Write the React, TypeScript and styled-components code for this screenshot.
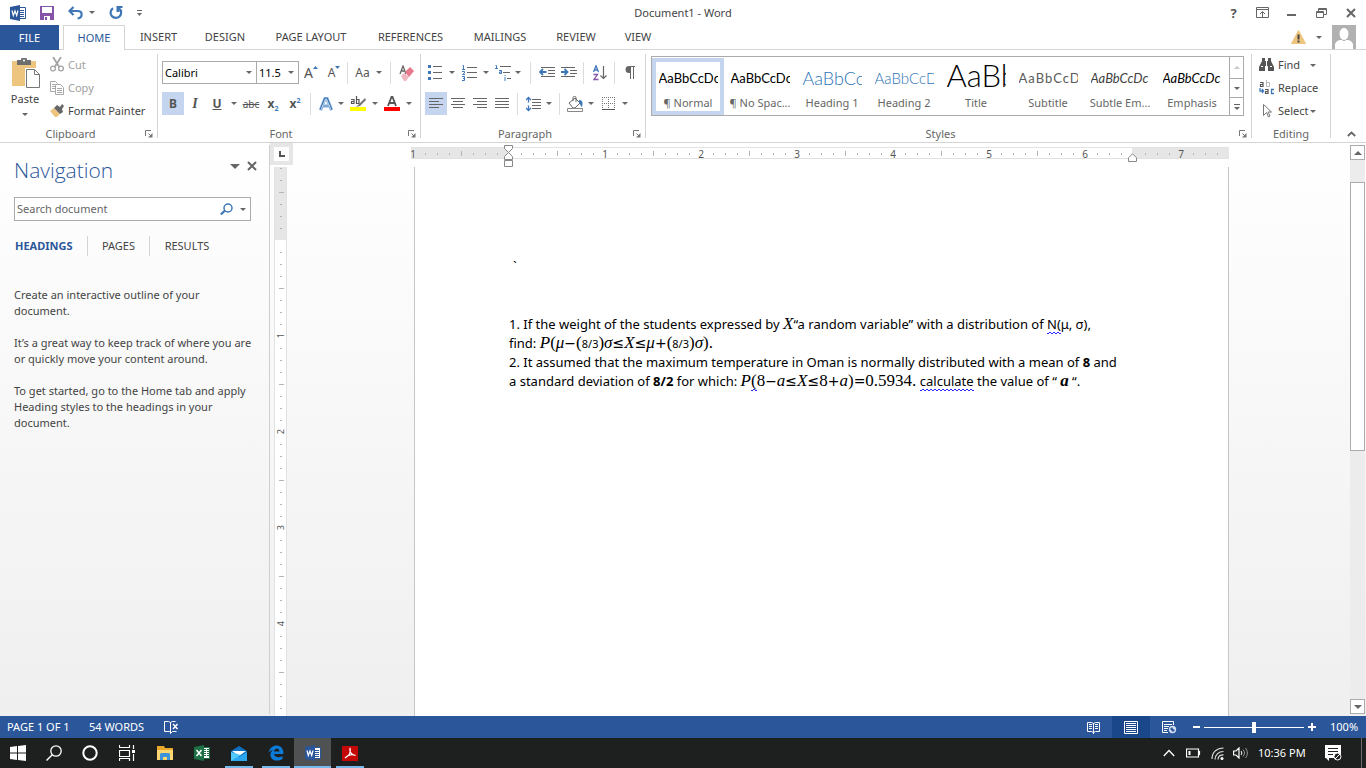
import React from 'react';
import styled, { createGlobalStyle, css } from 'styled-components';

const UI = '"Noto Sans", "Open Sans", sans-serif';
const BLUE = '#2b579a';
const INK = '#444444';
const LINE = '#d4d4d4';

const Global = createGlobalStyle`
  * { box-sizing: border-box; }
  html, body, #root { height: 100%; }
  body { margin: 0; overflow: hidden; background: #fff; color: ${INK}; font: 11px/16px ${UI}; }
  button, input, select { font: inherit; color: inherit; }
  svg { display: block; flex: none; }
  p, h1, h2, ul { margin: 0; padding: 0; font-weight: 400; }
`;

const Window = styled.div`
  display: flex;
  flex-direction: column;
  height: 100vh;
`;

const Button = styled.button<{ $w?: number; $on?: boolean; $dim?: boolean }>`
  display: flex;
  align-items: center;
  justify-content: center;
  flex: none;
  width: ${p => (p.$w ? `${p.$w}px` : 'auto')};
  height: 23px;
  padding: 0;
  border: 0;
  background: ${p => (p.$on ? '#c5d5f0' : 'transparent')};
  color: ${p => (p.$dim ? '#a0a0a0' : INK)};
`;

const Caret = styled.span<{ $size?: number; $up?: boolean; $color?: string }>`
  flex: none;
  width: 0;
  height: 0;
  border: ${p => p.$size || 3}px solid transparent;
  ${p =>
    p.$up
      ? css`border-top-width: 0; border-bottom-color: ${p.$color || '#666'};`
      : css`border-bottom-width: 0; border-top-color: ${p.$color || '#666'};`}
`;

/* Title bar */
const TitleBar = styled.header`
  display: grid;
  grid-template-columns: 1fr auto 1fr;
  align-items: center;
  flex: none;
  height: 25px;
`;
const QuickAccess = styled.div`
  display: flex;
  align-items: center;
  height: 22px;
  padding-left: 2px;
`;
const DocTitle = styled.h1`
  font-size: 11px;
  line-height: 16px;
`;
const WindowButtons = styled.div`
  display: flex;
  align-items: center;
  justify-content: flex-end;
  height: 23px;
`;

/* Ribbon tabs */
const TabStrip = styled.nav`
  display: flex;
  flex: none;
  height: 25px;
  border-bottom: 1px solid ${LINE};
`;
const Tab = styled.button<{ $w: number; $kind?: 'file' | 'active' }>`
  width: ${p => p.$w}px;
  height: 25px;
  padding: 0;
  flex: none;
  border: 0;
  background: #fff;
  line-height: 24px;
  ${p => p.$kind === 'file' && css`background: ${BLUE}; color: #fff; margin-right: 4px;`}
  ${p =>
    p.$kind === 'active' &&
    css`color: ${BLUE}; border: 1px solid ${LINE}; border-bottom: 0;`}
  ${p => !p.$kind && css`background: transparent; height: 24px;`}
`;
const Account = styled.div`
  display: flex;
  align-items: center;
  gap: 10px;
  margin-left: auto;
  padding-right: 10px;
`;

/* Ribbon */
const Ribbon = styled.section`
  display: flex;
  flex: none;
  height: 93px;
  padding: 4px 0;
  border-bottom: 1px solid ${LINE};
`;
const Group = styled.div<{ $w?: number }>`
  display: flex;
  flex-direction: column;
  flex: ${p => (p.$w ? `0 0 ${p.$w}px` : '1 1 0')};
  min-width: 0;
  border-right: 1px solid ${LINE};
`;
const GroupBody = styled.div<{ $pad?: string }>`
  display: flex;
  flex: 1;
  min-height: 0;
  padding: ${p => p.$pad || '0'};
`;
const GroupFoot = styled.div<{ $launcher: boolean }>`
  display: grid;
  grid-template: 8px / ${p => (p.$launcher ? '1fr 16px' : '1fr')};
  align-items: center;
  flex: none;
  color: #666;
  text-align: center;
`;
const Rows = styled.div<{ $gap: number }>`
  display: flex;
  flex-direction: column;
  gap: ${p => p.$gap}px;
`;
const Row = styled.div`
  display: flex;
  align-items: center;
`;
const Sep = styled.span<{ $m: string }>`
  flex: none;
  width: 1px;
  height: 22px;
  margin: ${p => p.$m};
  background: #dcdcdc;
`;
const PasteButton = styled.button`
  display: flex;
  flex-direction: column;
  align-items: center;
  width: 50px;
  padding: 4px 0 0;
  border: 0;
  background: none;
  svg { margin-bottom: 2px; }
  span + span { margin-top: 6px; }
`;
const Command = styled.button<{ $dim?: boolean }>`
  display: flex;
  align-items: center;
  gap: 4px;
  height: 23px;
  padding: 0 0 2px;
  border: 0;
  background: none;
  color: ${p => (p.$dim ? '#a0a0a0' : INK)};
`;
const Combo = styled.label<{ $w: number }>`
  display: flex;
  align-items: center;
  width: ${p => p.$w}px;
  height: 23px;
  padding: 0 4px 0 2px;
  border: 1px solid #ababab;
  color: #000;
  & + & { margin-left: -1px; }
  input {
    flex: 1;
    min-width: 0;
    width: 0;
    padding: 0;
    border: 0;
    outline: 0;
    background: none;
  }
`;
const Letter = styled.span<{ $size?: number; $bold?: boolean; $italic?: boolean; $line?: string; $serif?: boolean }>`
  font-family: ${p => (p.$serif ? '"Liberation Serif", serif' : UI)};
  font-size: ${p => p.$size || 12}px;
  font-weight: ${p => (p.$bold ? 700 : 400)};
  font-style: ${p => (p.$italic ? 'italic' : 'normal')};
  text-decoration: ${p => p.$line || 'none'};
  color: #555;
  line-height: 16px;
  sub, sup { font-size: 7px; line-height: 0; color: #3d77b8; }
`;

/* Style gallery */
const Gallery = styled.div`
  display: flex;
  flex: 1;
  height: 60px;
  border: 1px solid #ababab;
`;
const StyleList = styled.div`
  display: flex;
  flex: 1;
  overflow: hidden;
`;
const StyleTile = styled.button<{ $on?: boolean }>`
  display: flex;
  flex-direction: column;
  align-items: center;
  flex: 0 0 72px;
  height: 57px;
  margin-top: 1px;
  padding: 0;
  border: 4px solid ${p => (p.$on ? '#c5d5f0' : 'transparent')};
  background: none;
  color: #666;
  white-space: nowrap;
`;
const Preview = styled.span<{ $size: number; $color: string; $italic?: boolean; $light?: boolean; $spaced?: boolean }>`
  display: flex;
  align-items: flex-end;
  flex: none;
  width: 59px;
  height: 25px;
  margin-bottom: 8px;
  overflow: hidden;
  font-family: Lato, ${UI};
  font-size: ${p => p.$size}px;
  line-height: ${p => (p.$size > 20 ? 24 : 18)}px;
  color: ${p => p.$color};
  font-style: ${p => (p.$italic ? 'italic' : 'normal')};
  font-weight: ${p => (p.$light ? 300 : 400)};
  letter-spacing: ${p => (p.$spaced ? '1px' : 'normal')};
`;
const GalleryScroll = styled.div`
  display: grid;
  grid-template-rows: 21px 19px 1fr;
  width: 14px;
  border-left: 1px solid #ababab;
  button {
    display: flex;
    flex-direction: column;
    gap: 2px;
    align-items: center;
    justify-content: center;
    padding: 0;
    border: 0;
    background: none;
  }
  button + button { border-top: 1px solid #ababab; }
`;
const Dash = styled.span`
  width: 6px;
  height: 1px;
  background: #666;
`;
const Collapse = styled.div`
  display: flex;
  align-items: flex-end;
  justify-content: center;
  flex: 0 0 35px;
  padding-left: 6px;
  button { height: 8px; }
`;

/* Workspace */
const Workspace = styled.main`
  display: flex;
  flex: 1;
  min-height: 0;
  background: linear-gradient(#fff, #efefef);
`;
const NavPane = styled.aside`
  flex: 0 0 270px;
  margin: 2px 0;
  padding: 12px 14px 0;
  border-right: 1px solid #cfcfcf;
`;
const NavHead = styled.div`
  display: flex;
  align-items: flex-start;
  height: 26px;
  margin-right: -5px;
  h2 {
    flex: 1;
    font: 300 21px/26px "Open Sans", ${UI};
    color: ${BLUE};
  }
  button { height: 18px; }
`;
const SearchBox = styled.label`
  display: flex;
  align-items: center;
  gap: 7px;
  height: 24px;
  margin: 14px 4px 15px 0;
  padding: 0 4px 0 2px;
  border: 1px solid #ababab;
  background: #fff;
  input {
    flex: 1;
    min-width: 0;
    padding: 0;
    border: 0;
    outline: 0;
    background: none;
  }
  input::placeholder { color: #666; opacity: 1; }
`;
const NavTabs = styled.div`
  display: flex;
  align-items: center;
  height: 20px;
`;
const NavTab = styled.button<{ $w: number; $on?: boolean }>`
  width: ${p => p.$w}px;
  height: 20px;
  padding: 0;
  border: 0;
  background: none;
  color: ${p => (p.$on ? BLUE : INK)};
  font-weight: ${p => (p.$on ? 700 : 400)};
  & + & { border-left: 1px solid ${LINE}; }
  &:first-child { text-align: left; padding-left: 1px; }
`;
const NavText = styled.div`
  display: grid;
  gap: 16px;
  margin: 31px -14px 0 0;
`;

const VRulerColumn = styled.div`
  display: flex;
  flex-direction: column;
  align-items: center;
  flex: 0 0 23px;
  overflow: hidden;
`;
const TabSelector = styled.button`
  display: flex;
  align-items: center;
  justify-content: center;
  flex: none;
  width: 23px;
  height: 22px;
  padding: 0;
  border: 4px solid #e6e6e6;
  background: #fff;
`;
const VRuler = styled.div`
  flex: 1;
  width: 13px;
  margin: 2px 2px 0 0;
  overflow: hidden;
  border: solid #e2e2e2;
  border-width: 0 1px;
  background: linear-gradient(#e6e6e6 73px, #fff 73px);
`;
const VTicks = styled.div`
  margin-top: -5px;
  padding-left: 1px;
`;
const VTick = styled.div`
  display: flex;
  align-items: center;
  justify-content: center;
  height: 12px;
`;
const Mark = styled.i<{ $w: number; $h: number }>`
  width: ${p => p.$w}px;
  height: ${p => p.$h}px;
  background: #b4b4b4;
`;
const RulerNumber = styled.span<{ $turned?: boolean }>`
  font-size: 10px;
  line-height: 12px;
  color: #555;
  ${p => p.$turned && css`writing-mode: vertical-rl; rotate: 180deg; font-size: 9px;`}
`;

const Canvas = styled.section`
  display: flex;
  flex-direction: column;
  align-items: center;
  flex: 1;
  min-width: 0;
  padding-right: 3px;
`;
const HRuler = styled.div`
  position: relative;
  flex: none;
  width: 818px;
  height: 12px;
  margin-top: 4px;
  border: solid #e2e2e2;
  border-width: 1px 0;
  background: linear-gradient(90deg, #e6e6e6 97px, #fff 97px, #fff 721px, #e6e6e6 721px);
`;
const HTicks = styled.div`
  display: flex;
  height: 11px;
  margin-left: -4px;
`;
const HTick = styled.div`
  display: flex;
  align-items: center;
  justify-content: center;
  flex: 0 0 12px;
`;
const Indent = styled.svg<{ $x: number; $y: number }>`
  position: absolute;
  left: ${p => p.$x}px;
  top: ${p => p.$y}px;
`;
const Page = styled.article`
  flex: 1;
  width: 815px;
  margin: 8px 0 0 3px;
  padding: 90px 94px 0;
  border: solid #c6c6c6;
  border-width: 0 1px;
  background: #fff;
  color: #000;
  font: 13px/19px "Noto Sans", "Open Sans", sans-serif;
  white-space: nowrap;
`;
const Stray = styled.p`
  margin: 0 0 39px 4px;
`;
const MathText = styled.span`
  font: italic 17px "Liberation Serif", serif;
  line-height: 0;
  span { font-style: normal; }
  small { font: 11px "Noto Sans", sans-serif; line-height: 0; }
`;
const Op = styled.span`
  font-family: "DejaVu Sans", sans-serif;
  font-size: 14px;
`;
const Squiggle = styled.span`
  padding-bottom: 1px;
  background:
    linear-gradient(90deg, #2a2aff 2px, transparent 2px) 0 100% / 4px 1px repeat-x,
    linear-gradient(90deg, #2a2aff 2px, transparent 2px) 2px calc(100% - 1px) / 4px 1px repeat-x;
`;
const BoldItalic = styled.b`
  font: italic 700 17px "Liberation Serif", serif;
  line-height: 0;
`;

const ScrollBar = styled.div`
  display: flex;
  flex-direction: column;
  flex: 0 0 15px;
  margin: 2px 1px 2px 0;
  background: #ececec;
`;
const ScrollButton = styled.button`
  display: flex;
  align-items: center;
  justify-content: center;
  flex: none;
  height: 15px;
  padding: 0;
  border: 1px solid #ababab;
  background: #fff;
`;
const Track = styled.div`
  flex: 1;
  padding-top: 22px;
`;
const Thumb = styled.div`
  height: 52%;
  border: 1px solid #ababab;
  background: #fff;
`;

/* Status bar */
const StatusBar = styled.footer`
  display: flex;
  align-items: center;
  flex: none;
  height: 22px;
  padding: 0 8px 0 7px;
  background: ${BLUE};
  color: #fff;
`;
const StatusText = styled.span<{ $w?: number }>`
  width: ${p => (p.$w ? `${p.$w}px` : 'auto')};
`;
const Spacer = styled.span`
  flex: 1;
`;
const ViewButton = styled.button<{ $on?: boolean }>`
  display: flex;
  align-items: center;
  justify-content: center;
  width: 38px;
  height: 22px;
  padding: 0;
  border: 0;
  background: ${p => (p.$on ? '#19478a' : 'none')};
`;
const Zoom = styled.div`
  display: flex;
  align-items: center;
  margin: 0 11px 0 1px;
  button { width: 15px; height: 22px; padding: 0; border: 0; background: none; color: #fff; }
  button svg { margin: auto; }
  input {
    appearance: none;
    width: 100px;
    height: 12px;
    margin: 0;
    background: linear-gradient(#fff, #fff) center / 100% 1px no-repeat;
  }
  input::-webkit-slider-thumb {
    appearance: none;
    width: 4px;
    height: 11px;
    background: #fff;
  }
`;

/* Taskbar */
const TaskBar = styled.footer`
  display: flex;
  align-items: stretch;
  flex: none;
  height: 30px;
  background: #1e1f1f;
  color: #fff;
`;
const TaskButton = styled.button<{ $w: number; $open?: boolean; $active?: boolean }>`
  display: flex;
  align-items: center;
  justify-content: center;
  width: ${p => p.$w}px;
  padding: 0;
  border: 0;
  background: ${p => (p.$active ? '#505152' : 'none')};
  ${p =>
    p.$open &&
    css`
      background-image: linear-gradient(#76b9ed, #76b9ed);
      background-repeat: no-repeat;
      background-position: bottom;
      background-size: ${p.$active ? '100%' : '28px'} 2px;
    `}
`;
const Tray = styled.div`
  display: flex;
  align-items: center;
  margin-left: auto;
  padding-right: 4px;
`;
const Clock = styled.time`
  width: 67px;
  padding-left: 5px;
`;
const Peek = styled.span`
  width: 1px;
  height: 30px;
  margin-left: 15px;
  background: #6a6a6a;
`;

/* Icons */
type IconProps = { w: number; h: number; children: React.ReactNode };
const Icon = ({ w, h, children }: IconProps) => (
  <svg width={w} height={h} viewBox={`0 0 ${w} ${h}`} fill="none" aria-hidden="true">{children}</svg>
);
const Lines = ({ rows, stroke = '#666' }: { rows: [number, number, number][]; stroke?: string }) => (
  <path d={rows.map(([x, y, w]) => `M${x} ${y + 0.5}h${w}`).join('')} stroke={stroke} />
);
const WordIcon = () => (
  <Icon w={16} h={16}>
    <path d="M8.5 2.5h7v11h-7z" fill="#fff" stroke={BLUE} />
    <path d="M10 5.5h4M10 7.5h4M10 9.5h4M10 11.5h4" stroke={BLUE} />
    <path d="M0 2l10-2v16L0 14z" fill={BLUE} />
    <path d="M2 5.5l1.300 5L5 6l1.700 4.500 1.300-5" stroke="#fff" strokeWidth="1.200" />
  </Icon>
);
const SaveIcon = () => (
  <Icon w={14} h={14}>
    <path d="M0 0h14v14H0z" fill="#8655a8" />
    <path d="M2 1h10v6H2zM4 10h6v4H4z" fill="#fff" />
    <path d="M5 11h2v3H5z" fill="#8655a8" />
  </Icon>
);
const UndoIcon = () => (
  <Icon w={15} h={14}>
    <path d="M5.500 1L1.500 5l4 4M2 5h7.500c5.500 0 5.500 6.500 0 7.500" stroke="#3e77b6" strokeWidth="2.200" />
  </Icon>
);
const RedoIcon = () => (
  <Icon w={14} h={14}>
    <path d="M4 2.200A5.300 5.300 0 1 0 10 2.400" stroke="#3e77b6" strokeWidth="2.200" />
    <path d="M7.500 0h6v2H10.500l0 4h-3z" fill="#3e77b6" />
  </Icon>
);
const Launcher = () => (
  <Button $w={16} aria-label="More options">
    <Icon w={8} h={8}>
      <path d="M.5 6V.5H6M3.500 3.500l3 3" stroke="#777" />
      <path d="M7.500 3v4.500H3z" fill="#777" />
    </Icon>
  </Button>
);
const PasteIcon = () => (
  <Icon w={29} h={31}>
    <path d="M1 3h24v25H1z" fill="#eec57e" />
    <path d="M6 2h4a3 3 0 0 1 6 0h4v5H6z" fill="#6e6e6e" />
    <circle cx="13" cy="2.500" r="1" fill="#fff" />
    <path d="M14 10h15v21H14z" fill="#fff" />
    <path d="M15.500 11.500h8l5 5v13h-13zM23.500 11.500v5h5" stroke="#777" fill="#fff" />
  </Icon>
);
const CutIcon = () => (
  <Icon w={14} h={15}>
    <path d="M3 0l6 9.500M11 0L5 9.500" stroke="#a3a3a3" strokeWidth="1.800" />
    <circle cx="3" cy="11.500" r="2.400" stroke="#a3a3a3" strokeWidth="1.300" />
    <circle cx="11" cy="11.500" r="2.400" stroke="#a3a3a3" strokeWidth="1.300" />
  </Icon>
);
const CopyIcon = () => (
  <Icon w={14} h={14}>
    <path d="M5 10.500H.5V.5h5l2 2M2 3.500h3M2 5.500h3M2 7.500h3" stroke="#a8a8a8" />
    <path d="M5.500 3.500h5l3 3v7h-8zM7 7.500h5M7 9.500h5M7 11.500h5" stroke="#a8a8a8" fill="#fff" />
  </Icon>
);
const PainterIcon = () => (
  <Icon w={14} h={13}>
    <path d="M0 7l4-3 6 6-3 3H5z" fill="#eec57e" />
    <path d="M4 4l3-3 3 2 2-3 2 2-2 3 1 3-3 2z" fill="#666" />
  </Icon>
);
const GrowShrink = ({ size, up }: { size: number; up?: boolean }) => (
  <>
    <Letter $size={size}>A</Letter>
    <Icon w={5} h={14}><path d={up ? 'M0 3l2.500-3L5 3z' : 'M0 0h5L2.500 3z'} fill="#3e77b6" /></Icon>
  </>
);
const EraserIcon = () => (
  <Icon w={15} h={16}>
    <path d="M1 9l3-8 3 8M2 6h4" stroke="#666" strokeWidth="1.300" />
    <path d="M2 11l3-3 5 4-3 4H5z" fill="#f2b6c0" />
    <path d="M6 7l5-5 4 4-5 6z" fill="#e8798d" />
  </Icon>
);
const TextEffectIcon = () => (
  <Icon w={14} h={14}>
    <path d="M1.500 13L6 1.500h2L12.500 13M3.500 9h7" stroke="#a9c8ec" strokeWidth="3.500" />
    <path d="M1.500 13L6 1.500h2L12.500 13M3.500 9h7" stroke="#3e77b6" strokeWidth="2.200" />
    <path d="M2 13L6.500 2h1L12 13M3.500 9h7" stroke="#fff" strokeWidth=".7" />
  </Icon>
);
const HighlightIcon = () => (
  <Icon w={17} h={15}>
    <path d="M0 11h16v4H0z" fill="#ffff00" />
    <path d="M1 3.500h3v4H1.500v-2H4M6.500 0v7.500h2.500v-4H6.500" stroke="#555" strokeWidth="1.200" />
    <path d="M15 2l-6 6-3 3 4-1 6-6z" fill="#777" />
  </Icon>
);
const FontColorIcon = () => (
  <Icon w={16} h={15}>
    <path d="M0 11h16v4H0z" fill="#f00" />
    <path d="M4 10L7.500 1h1L12 10M5.500 7h5" stroke="#555" strokeWidth="1.800" />
  </Icon>
);
const BulletsIcon = () => (
  <Icon w={14} h={15}>
    <Lines rows={[[5, 1, 9], [5, 7, 9], [5, 13, 9]]} />
    <path d="M0 0h3v3H0zM0 6h3v3H0zM0 12h3v3H0z" fill="#3e77b6" />
  </Icon>
);
const NumbersIcon = () => (
  <Icon w={15} h={16}>
    <Lines rows={[[5, 2, 10], [5, 7, 10], [5, 12, 10]]} />
    <path d="M.5.5h1v4M0 4.500h3M0 6.500h2.500v1.500L.5 9.500h2.500M0 11.500h2.500v4H0M1 13.500h2" stroke="#3e77b6" />
  </Icon>
);
const MultiIcon = () => (
  <Icon w={16} h={16}>
    <Lines rows={[[5, 1, 11], [8, 7, 7], [12, 13, 4]]} />
    <path d="M.5.5h1v3M0 3.500h3M4 5.500h2.500v3H4.500v-1.500h2M10 10v1M10 12v4" stroke="#3e77b6" />
  </Icon>
);
const IndentIcon = ({ out }: { out?: boolean }) => (
  <Icon w={16} h={11}>
    <Lines rows={[[out ? 2 : 0, 0, 14], [9, 3, 7], [9, 6, 7], [out ? 2 : 0, 9, 14]]} />
    <path d={out ? 'M7.500 5h-6M4 2L1 5l3 3' : 'M0 5h6M3.500 2l3 3-3 3'} stroke="#3e77b6" strokeWidth="1.800" />
  </Icon>
);
const SortIcon = () => (
  <Icon w={14} h={16}>
    <path d="M.5 7L3 .8 5.500 7M1.500 5h3" stroke="#3e77b6" strokeWidth="1.300" />
    <path d="M.5 9.500h4L1 14.500h4.500" stroke="#8655a8" strokeWidth="1.300" />
    <path d="M10.500 1v12M7.500 10.500l3 3 3-3" stroke="#666" strokeWidth="1.200" />
  </Icon>
);
const PilcrowIcon = () => (
  <Icon w={10} h={13}>
    <path d="M10 0H4a3.500 3.500 0 0 0 0 7h1v6h1V1h2v12h1V1h1z" fill="#666" />
  </Icon>
);
const AlignIcon = ({ kind }: { kind: 'l' | 'c' | 'r' | 'j' }) => {
  const short = { l: 0, c: 2, r: 4, j: 0 }[kind];
  const w = kind === 'j' ? 14 : 10;
  return (
    <Icon w={14} h={11}>
      <Lines rows={[[0, 0, 14], [short, 3, w], [0, 6, 14], [short, 9, w]]} />
    </Icon>
  );
};
const SpacingIcon = () => (
  <Icon w={15} h={16}>
    <Lines rows={[[6, 3, 9], [6, 6, 9], [6, 9, 9], [6, 12, 9]]} />
    <path d="M2.500 1.500v5M0 4l2.500-2.500L5 4M2.500 9.500v5M0 12l2.500 2.500L5 12" stroke="#3e77b6" strokeWidth="1.300" />
  </Icon>
);
const BucketIcon = () => (
  <Icon w={17} h={16}>
    <path d="M2 7l6-5 5 5-5 5H6zM6 5V1.500c0-1.500 3-1.500 3 0V6" stroke="#666" />
    <path d="M12 4c4 0 4 3 3 7-2-1-2-4-3-5z" fill="#3e77b6" />
    <path d="M.5 12.500h15v3H.5z" stroke="#888" fill="#fff" />
  </Icon>
);
const BorderIcon = () => (
  <Icon w={13} h={13}>
    <path d="M.5 0v12M6.500 0v12M12.500 0v12M0 .5h13M0 6.500h13" stroke="#777" strokeDasharray="1 1" />
    <path d="M0 12.500h13" stroke="#555" />
  </Icon>
);
const FindIcon = () => (
  <Icon w={15} h={13}>
    <path d="M3 0h3v3h3V0h3v3l3 6v4H9V8H6v5H0V9l3-6z" fill="#555" />
    <path d="M7.500 3v5M2 8.500h2M11 8.500h2" stroke="#fff" />
  </Icon>
);
const ReplaceIcon = () => (
  <Icon w={15} h={15}>
    <path d="M1 2.500h3v4H1.500v-2H4" stroke="#555" strokeWidth="1.200" />
    <path d="M7.500 0v6.500h3v-4h-3" stroke="#bbb" />
    <path d="M6 9.500h3v4H6.500v-2H9" stroke="#555" strokeWidth="1.200" />
    <path d="M15 9.500H12.500v4H15M1 8v3h3M3 9l1.500 2L3 13" stroke="#3e77b6" strokeWidth="1.300" />
  </Icon>
);
const SelectIcon = () => (
  <Icon w={15} h={15}>
    <path d="M4.500 1.500v11l3-3 2 4.500 1.500-1-2-4h3.500z" stroke="#777" />
  </Icon>
);
const CrossIcon = () => (
  <Icon w={10} h={10}><path d="M1 1l8 8M9 1L1 9" stroke="#666" strokeWidth="2" /></Icon>
);
const SearchIcon = () => (
  <Icon w={13} h={12}>
    <circle cx="8" cy="5" r="4" stroke="#3e77b6" strokeWidth="1.500" />
    <path d="M5 7.500L.8 11.500" stroke="#3e77b6" strokeWidth="2.200" />
  </Icon>
);
const ReadIcon = () => (
  <Icon w={13} h={13}>
    <path d="M.5 1.500h4l2 1 2-1h4v9h-4l-2 1-2-1h-4zM6.500 2v11M2 3.500h3M2 5.500h3M2 7.500h3M8 3.500h3M8 5.500h3M8 7.500h3" stroke="#fff" />
  </Icon>
);
const PrintIcon = () => (
  <Icon w={14} h={13}>
    <path d="M.5.5h13v12H.5z" stroke="#fff" />
    <Lines stroke="#fff" rows={[[2, 2, 10], [2, 4, 10], [2, 6, 10], [2, 8, 10], [2, 10, 10]]} />
  </Icon>
);
const WebIcon = () => (
  <Icon w={15} h={13}>
    <path d="M6 11.500H.5V.5h11V4M2 3.500h8M2 5.500h5M2 7.500h4M2 9.500h3" stroke="#fff" />
    <circle cx="10.500" cy="8.500" r="3.700" fill="#cfdcf0" />
    <path d="M8 8l2-2 1 2 2 1-2 2z" fill={BLUE} />
  </Icon>
);
const ProofIcon = () => (
  <Icon w={15} h={13}>
    <path d="M6.500 11L5.500 10.500H.5V.5h4l2 1 2-1h3M6.500 1.500v11l2-2h4" stroke="#fff" />
    <path d="M9 3l4.500 5M13.500 3L9 8" stroke="#fff" strokeWidth="1.500" />
  </Icon>
);
const ExcelIcon = () => (
  <Icon w={16} h={16}>
    <path d="M8.500 2.500h7v11h-7z" fill="#fff" stroke="#1d7044" />
    <path d="M10 4.500h2M13 4.500h2M10 6.500h2M13 6.500h2M10 8.500h2M13 8.500h2M10 10.500h2M13 10.500h2" stroke="#1d7044" />
    <path d="M0 2l10-2v16L0 14z" fill="#1d7044" />
    <path d="M2.500 5l5 6M7.500 5l-5 6" stroke="#fff" strokeWidth="1.500" />
  </Icon>
);

const TABS: [string, number][] = [
  ['INSERT', 67], ['DESIGN', 66], ['PAGE LAYOUT', 106], ['REFERENCES', 93],
  ['MAILINGS', 86], ['REVIEW', 66], ['VIEW', 58],
];
const STYLES = [
  { name: '¶ Normal', text: 'AaBbCcDc', size: 13, color: '#000', on: true },
  { name: '¶ No Spac...', text: 'AaBbCcDc', size: 13, color: '#000' },
  { name: 'Heading 1', text: 'AaBbCc', size: 18, color: '#2e74b5', light: true },
  { name: 'Heading 2', text: 'AaBbCcD', size: 15, color: '#2e74b5', light: true },
  { name: 'Title', text: 'AaBb', size: 31, color: '#000', light: true },
  { name: 'Subtitle', text: 'AaBbCcD', size: 13, color: '#5a5a5a', spaced: true },
  { name: 'Subtle Em...', text: 'AaBbCcDc', size: 13, color: '#404040', italic: true },
  { name: 'Emphasis', text: 'AaBbCcDc', size: 13, color: '#000', italic: true },
];

const Drop = ({ w = 10, label = 'More' }: { w?: number; label?: string }) => (
  <Button $w={w} aria-label={label}><Caret /></Button>
);

const Foot = ({ label, launcher = true }: { label: string; launcher?: boolean }) => (
  <GroupFoot $launcher={launcher}><span>{label}</span>{launcher && <Launcher />}</GroupFoot>
);

const RibbonBar = () => (
  <Ribbon>
    <Group $w={158}>
      <GroupBody>
        <PasteButton><PasteIcon /><span>Paste</span><Caret /></PasteButton>
        <Rows $gap={0}>
          <Command $dim><CutIcon />Cut</Command>
          <Command $dim><CopyIcon />Copy</Command>
          <Command><PainterIcon />Format Painter</Command>
        </Rows>
      </GroupBody>
      <Foot label="Clipboard" />
    </Group>
    <Group $w={263}>
      <GroupBody $pad="7px 0 0 4px">
        <Rows $gap={8}>
          <Row>
            <Combo $w={95}><input defaultValue="Calibri" aria-label="Font" /><Caret /></Combo>
            <Combo $w={43}><input defaultValue="11.5" aria-label="Font size" /><Caret /></Combo>
            <Button $w={24} aria-label="Grow font"><GrowShrink size={14} up /></Button>
            <Button $w={22} aria-label="Shrink font"><GrowShrink size={12} /></Button>
            <Sep $m="0 5px 0 2px" />
            <Button $w={19}><Letter $size={12}>Aa</Letter></Button><Drop w={13} />
            <Sep $m="0 4px 0 5px" />
            <Button $w={22} aria-label="Clear formatting"><EraserIcon /></Button>
          </Row>
          <Row>
            <Button $w={22} $on><Letter $bold>B</Letter></Button>
            <Button $w={22}><Letter $serif $italic $bold $size={14}>I</Letter></Button>
            <Button $w={22}><Letter $bold $line="underline">U</Letter></Button><Drop w={12} />
            <Button $w={22}><Letter $size={10} $line="line-through">abc</Letter></Button>
            <Button $w={22}><Letter $bold>x<sub>2</sub></Letter></Button>
            <Button $w={22}><Letter $bold>x<sup>2</sup></Letter></Button>
            <Sep $m="0 5px 0 4px" />
            <Button $w={20} aria-label="Text effects"><TextEffectIcon /></Button><Drop />
            <Button $w={24} aria-label="Highlight"><HighlightIcon /></Button><Drop />
            <Button $w={24} aria-label="Font color"><FontColorIcon /></Button><Drop />
          </Row>
        </Rows>
      </GroupBody>
      <Foot label="Font" />
    </Group>
    <Group $w={225}>
      <GroupBody $pad="7px 0 0 4px">
        <Rows $gap={8}>
          <Row>
            <Button $w={20} aria-label="Bullets"><BulletsIcon /></Button><Drop w={14} />
            <Button $w={20} aria-label="Numbering"><NumbersIcon /></Button><Drop w={14} />
            <Button $w={20} aria-label="Multilevel list"><MultiIcon /></Button><Drop />
            <Sep $m="0 5px 0 7px" />
            <Button $w={22} aria-label="Decrease indent"><IndentIcon out /></Button>
            <Button $w={22} aria-label="Increase indent"><IndentIcon /></Button>
            <Sep $m="0 5px 0 3px" />
            <Button $w={22} aria-label="Sort"><SortIcon /></Button>
            <Sep $m="0 4px 0 3px" />
            <Button $w={22} aria-label="Show marks"><PilcrowIcon /></Button>
          </Row>
          <Row>
            <Button $w={22} $on aria-label="Align left"><AlignIcon kind="l" /></Button>
            <Button $w={22} aria-label="Center"><AlignIcon kind="c" /></Button>
            <Button $w={22} aria-label="Align right"><AlignIcon kind="r" /></Button>
            <Button $w={22} aria-label="Justify"><AlignIcon kind="j" /></Button>
            <Sep $m="0 4px" />
            <Button $w={22} aria-label="Line spacing"><SpacingIcon /></Button><Drop />
            <Sep $m="0 4px 0 5px" />
            <Button $w={22} aria-label="Shading"><BucketIcon /></Button><Drop />
            <Button $w={24} aria-label="Borders"><BorderIcon /></Button><Drop />
          </Row>
        </Rows>
      </GroupBody>
      <Foot label="Paragraph" />
    </Group>
    <Group>
      <GroupBody $pad="2px 7px 0 5px">
        <Gallery>
          <StyleList>
            {STYLES.map(s => (
              <StyleTile key={s.name} $on={s.on}>
                <Preview $size={s.size} $color={s.color} $italic={s.italic} $light={s.light} $spaced={s.spaced}>{s.text}</Preview>
                {s.name}
              </StyleTile>
            ))}
          </StyleList>
          <GalleryScroll>
            <button aria-label="Previous styles"><Caret $up $color="#c6c6c6" /></button>
            <button aria-label="Next styles"><Caret /></button>
            <button aria-label="All styles"><Dash /><Caret /></button>
          </GalleryScroll>
        </Gallery>
      </GroupBody>
      <Foot label="Styles" />
    </Group>
    <Group $w={79}>
      <GroupBody $pad="0 0 0 7px">
        <Rows $gap={0}>
          <Row><Command><FindIcon />Find</Command><Drop w={26} /></Row>
          <Command><ReplaceIcon />Replace</Command>
          <Row><Command><SelectIcon />Select</Command><Drop w={8} /></Row>
        </Rows>
      </GroupBody>
      <Foot label="Editing" launcher={false} />
    </Group>
    <Collapse>
      <Button $w={20} aria-label="Collapse the ribbon">
        <Icon w={9} h={6}><path d="M.8 5l3.700-3.500L8.200 5" stroke="#666" strokeWidth="1.800" /></Icon>
      </Button>
    </Collapse>
  </Ribbon>
);

const VerticalRuler = () => (
  <VRulerColumn>
    <TabSelector aria-label="Tab selector">
      <Icon w={6} h={6}><path d="M1 0v5h5" stroke="#555" strokeWidth="2" /></Icon>
    </TabSelector>
    <VRuler>
      <VTicks>
        {Array.from({ length: 46 }, (_, i) => (
          <VTick key={i}>
            {i === 6 ? null : (i + 2) % 8 === 0
              ? <RulerNumber $turned>{(i - 6) / 8}</RulerNumber>
              : <Mark $w={(i + 6) % 8 === 0 ? 5 : 2} $h={1} />}
          </VTick>
        ))}
      </VTicks>
    </VRuler>
  </VRulerColumn>
);

const HorizontalRuler = () => (
  <HRuler>
    <HTicks>
      {Array.from({ length: 68 }, (_, i) => (
        <HTick key={i}>
          {i === 8 || i === 60 ? null : i % 8 === 0
            ? <RulerNumber>{Math.abs(i / 8 - 1)}</RulerNumber>
            : <Mark $w={1} $h={i % 8 === 4 ? 5 : 2} />}
        </HTick>
      ))}
    </HTicks>
    <Indent $x={93} $y={-3} width="9" height="22" fill="#fff" stroke="#888">
      <path d="M.5.5h8v3l-4 4-4-4zM4.500 7.500l4 4v3h-8v-3zM.5 15.500h8v6h-8z" />
    </Indent>
    <Indent $x={717} $y={5} width="9" height="9" fill="#fff" stroke="#888">
      <path d="M4.500.8l4 4v3.700h-8v-3.700z" />
    </Indent>
  </HRuler>
);

export default function App() {
  return (
    <Window>
      <Global />
      <TitleBar>
        <QuickAccess>
          <Button $w={32} aria-label="Word"><WordIcon /></Button>
          <Button $w={26} aria-label="Save"><SaveIcon /></Button>
          <Button $w={30} aria-label="Undo"><UndoIcon /></Button>
          <Drop w={4} />
          <Button $w={44} aria-label="Repeat"><RedoIcon /></Button>
          <Button $w={4} aria-label="Customize quick access">
            <Icon w={6} h={6}><path d="M0 .5h5" stroke="#666" /><path d="M0 3h5L2.500 6z" fill="#666" /></Icon>
          </Button>
        </QuickAccess>
        <DocTitle>Document1 - Word</DocTitle>
        <WindowButtons>
          <Button $w={29}><Letter $bold $size={13}>?</Letter></Button>
          <Button $w={29} aria-label="Ribbon display options">
            <Icon w={13} h={11}><path d="M.5.5h12v10H.5zM.5 2.500h12M6.500 10V5M4 7l2.500-2.500L9 7" stroke="#666" /></Icon>
          </Button>
          <Button $w={29} aria-label="Minimize"><Icon w={9} h={10}><path d="M0 7h9" stroke="#666" strokeWidth="2" /></Icon></Button>
          <Button $w={30} aria-label="Restore">
            <Icon w={11} h={10}><path d="M2.500 3V.5h8v6H8M2 1.500h9M.5 3.500h7v6h-7zM0 4.500h8" stroke="#666" /></Icon>
          </Button>
          <Button $w={30} aria-label="Close"><CrossIcon /></Button>
        </WindowButtons>
      </TitleBar>
      <TabStrip>
        <Tab $w={59} $kind="file">FILE</Tab>
        <Tab $w={62} $kind="active">HOME</Tab>
        {TABS.map(([name, w]) => <Tab key={name} $w={w}>{name}</Tab>)}
        <Account>
          <Icon w={15} h={14}>
            <path d="M7.500.5l7 13H.5z" fill="#eec57e" stroke="#eec57e" strokeLinejoin="round" />
            <path d="M7.500 4.500v5M7.500 10.500v2" stroke="#444" strokeWidth="2" />
          </Icon>
          <Caret />
          <Icon w={24} h={24}>
            <path d="M0 0h24v24H0z" fill="#b1b1b1" />
            <path d="M3 24v-4c0-3 3-5 6-5h6c3 0 6 2 6 5v4z" fill="#fff" />
            <ellipse cx="12" cy="9" rx="5" ry="6.500" fill="#fff" stroke="#b1b1b1" />
          </Icon>
        </Account>
      </TabStrip>
      <RibbonBar />
      <Workspace>
        <NavPane>
          <NavHead>
            <h2>Navigation</h2>
            <Button $w={18} aria-label="Pane options"><Caret $size={5} /></Button>
            <Button $w={16} aria-label="Close pane"><CrossIcon /></Button>
          </NavHead>
          <SearchBox>
            <input placeholder="Search document" aria-label="Search document" />
            <SearchIcon />
            <Caret />
          </SearchBox>
          <NavTabs>
            <NavTab $w={73} $on>HEADINGS</NavTab>
            <NavTab $w={62}>PAGES</NavTab>
            <NavTab $w={75}>RESULTS</NavTab>
          </NavTabs>
          <NavText>
            <p>Create an interactive outline of your<br />document.</p>
            <p>It’s a great way to keep track of where you are<br />or quickly move your content around.</p>
            <p>To get started, go to the Home tab and apply<br />Heading styles to the headings in your<br />document.</p>
          </NavText>
        </NavPane>
        <VerticalRuler />
        <Canvas>
          <HorizontalRuler />
          <Page>
            <Stray>`</Stray>
            <p>1. If the weight of the students expressed by <MathText>X</MathText>“a random variable” with a distribution of <Squiggle>N(</Squiggle>μ, σ),</p>
            <p>find: <MathText>P<span>(</span>μ<Op>−</Op><span>(</span><small>8/3</small><span>)</span>σ<Op>≤</Op>X<Op>≤</Op>μ<Op>+</Op><span>(</span><small>8/3</small><span>)</span>σ<span>).</span></MathText></p>
            <p>2. It assumed that the maximum temperature in Oman is normally distributed with a mean of <b>8</b> and</p>
            <p>a standard deviation of <b>8/2</b> for which: <MathText>P<Squiggle>(</Squiggle><span>8</span><Op>−</Op>a<Op>≤</Op>X<Op>≤</Op><span>8</span><Op>+</Op>a<span>)</span><Op>=</Op><span>0.5934.</span></MathText> <Squiggle>calculate</Squiggle> the value of “ <BoldItalic>a</BoldItalic> “.</p>
          </Page>
        </Canvas>
        <ScrollBar>
          <ScrollButton aria-label="Scroll up"><Caret $up $size={4} /></ScrollButton>
          <Track><Thumb /></Track>
          <ScrollButton aria-label="Scroll down"><Caret $size={4} /></ScrollButton>
        </ScrollBar>
      </Workspace>
      <StatusBar>
        <StatusText $w={82}>PAGE 1 OF 1</StatusText>
        <StatusText $w={75}>54 WORDS</StatusText>
        <ProofIcon />
        <Spacer />
        <ViewButton aria-label="Read mode"><ReadIcon /></ViewButton>
        <ViewButton $on aria-label="Print layout"><PrintIcon /></ViewButton>
        <ViewButton aria-label="Web layout"><WebIcon /></ViewButton>
        <Zoom>
          <button aria-label="Zoom out"><Icon w={7} h={8}><path d="M0 4h7" stroke="#fff" strokeWidth="2" /></Icon></button>
          <input type="range" min="10" max="190" defaultValue="100" aria-label="Zoom" />
          <button aria-label="Zoom in"><Icon w={8} h={8}><path d="M0 4h8M4 0v8" stroke="#fff" strokeWidth="2" /></Icon></button>
        </Zoom>
        <StatusText $w={28}>100%</StatusText>
      </StatusBar>
      <TaskBar>
        <TaskButton $w={36} aria-label="Start">
          <Icon w={16} h={16}><path d="M0 2l7-1v6.500H0zM8 1l8-1v7.500H8zM0 8.500h7V15l-7-1zM8 8.500h8V16l-8-1z" fill="#fff" /></Icon>
        </TaskButton>
        <TaskButton $w={36} aria-label="Search">
          <Icon w={16} h={16}><circle cx="10" cy="6" r="5.200" stroke="#fff" strokeWidth="1.300" /><path d="M6.300 9.700L.5 15.500" stroke="#fff" strokeWidth="1.400" /></Icon>
        </TaskButton>
        <TaskButton $w={36} aria-label="Cortana">
          <Icon w={16} h={16}><circle cx="8" cy="8" r="6.700" stroke="#fff" strokeWidth="2" /></Icon>
        </TaskButton>
        <TaskButton $w={38} aria-label="Task view">
          <Icon w={17} h={16}><path d="M.5 0v2.500h10V0M.5 5.500h10v6H.5zM.5 16v-2.500h10V16M14.500 0v4M14.500 9v7" stroke="#fff" strokeWidth="1.200" /><path d="M13 5h3v3h-3z" fill="#fff" /></Icon>
        </TaskButton>
        <TaskButton $w={37} aria-label="File Explorer">
          <Icon w={16} h={14}><path d="M0 0h7l1 2h8v12H0z" fill="#e8a92c" /><path d="M0 4h16v10H0z" fill="#fcd670" /><path d="M3 8l1-1h8l1 1v6h-3v-3H6v3H3z" fill="#3c94dd" /></Icon>
        </TaskButton>
        <TaskButton $w={37} aria-label="Excel"><ExcelIcon /></TaskButton>
        <TaskButton $w={37} $open aria-label="Mail">
          <Icon w={16} h={15}><path d="M0 5l8-5 8 5v10H0z" fill="#0d6fc0" /><path d="M1 5h14l-7 5z" fill="#fff" /><path d="M0 6l8 5 8-5v9H0z" fill="#2aa7ee" /><path d="M0 15l10-6L0 6z" fill="#50c8fa" /></Icon>
        </TaskButton>
        <TaskButton $w={37} $open aria-label="Edge">
          <Icon w={16} h={16}><path d="M.5 7.500C2 2.500 5 .5 8.500.5c5 0 7 4 7 8.500H6c0 3 5 4.500 8.500 2v3C8 17.500 2 14.500 2.500 9c.3-2 1.500-3.500 3-4.500C4 5 2 6 .5 7.500zM6 6.500h5.500c0-4-5-4-5.500 0z" fill="#0c7cd9" /></Icon>
        </TaskButton>
        <TaskButton $w={37} $open $active aria-label="Word"><WordIcon /></TaskButton>
        <TaskButton $w={37} $open aria-label="Acrobat Reader">
          <Icon w={16} h={15}><path d="M0 0h16v15H0z" fill="#c40808" /><path d="M3 12c4-2 6-6 5-10-1 4 2 7 5.500 7.500C10 8 6 9 3 12z" stroke="#fff" strokeWidth="1.200" /></Icon>
        </TaskButton>
        <Tray>
          <TaskButton $w={24} aria-label="Show hidden icons"><Icon w={12} h={8}><path d="M.8 7L6 1.500 11.200 7" stroke="#fff" strokeWidth="1.300" /></Icon></TaskButton>
          <TaskButton $w={24} aria-label="Battery"><Icon w={15} h={10}><path d="M.5 1h12v8H.5zM13.500 3v4" stroke="#fff" strokeWidth="1.200" /><path d="M2.500 3h2v4h-2z" fill="#fff" /></Icon></TaskButton>
          <TaskButton $w={24} aria-label="Network"><Icon w={13} h={13}><path d="M1 12C1 5 6 1 12.500 1M4 12.500C4 8 7.500 4.500 12.500 4.500M7 12.500c0-3 2-4.700 5.500-4.700" stroke="#ddd" strokeWidth="1.200" /><circle cx="11" cy="11.500" r="1.500" fill="#fff" /></Icon></TaskButton>
          <TaskButton $w={24} aria-label="Volume"><Icon w={16} h={12}><path d="M.6 4h2.400l3-3v10L3 8H.6z" stroke="#fff" strokeWidth="1.200" /><path d="M8 4c1 1 1 3 0 4" stroke="#fff" /><path d="M10 2.500c2 2 2 5 0 7M12.500 1c2.500 3 2.500 7 0 10" stroke="#999" /></Icon></TaskButton>
          <Clock>10:36 PM</Clock>
          <TaskButton $w={26} aria-label="Notifications">
            <Icon w={17} h={16}><path d="M0 0h16v9l-6 4H4v3l-3-3H0z" fill="#fff" /><path d="M3 3.500h10M3 6.500h10M3 9.500h5" stroke="#222" /><circle cx="12.500" cy="11.500" r="3.500" stroke="#fff" fill="#222" /><path d="M10 14l5-5" stroke="#fff" /></Icon>
          </TaskButton>
          <Peek />
        </Tray>
      </TaskBar>
    </Window>
  );
}
